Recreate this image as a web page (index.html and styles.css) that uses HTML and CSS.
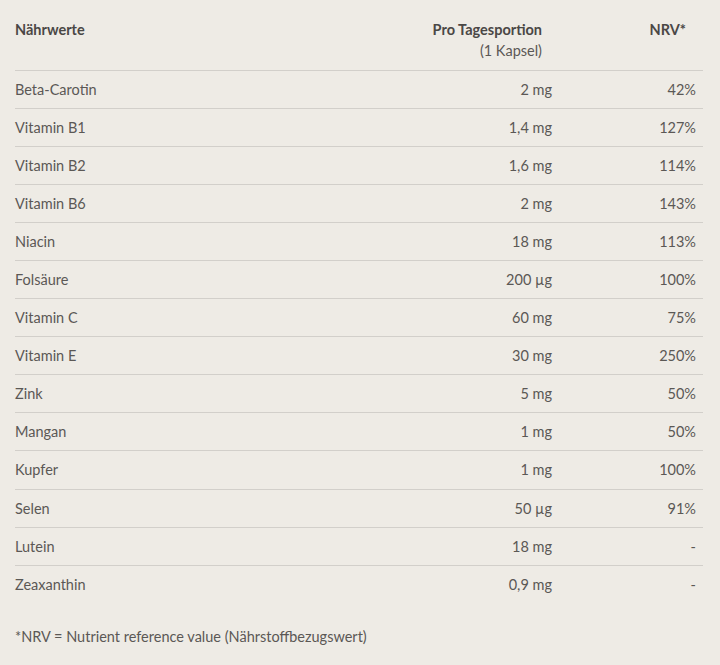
FILE: index.html
```html
<!DOCTYPE html>
<html lang="de">
<head>
<meta charset="utf-8">
<link rel="stylesheet" href="styles.css">
</head>
<body>
<div class="wrap">
<table class="nutri">
<thead>
<tr>
<th class="c1">Nährwerte</th>
<th class="c2">Pro Tagesportion<br><span class="sub">(1 Kapsel)</span></th>
<th class="c3">NRV*</th>
</tr>
</thead>
<tbody>
<tr><td class="c1">Beta-Carotin</td><td class="c2">2 mg</td><td class="c3">42%</td></tr>
<tr><td class="c1">Vitamin B1</td><td class="c2">1,4 mg</td><td class="c3">127%</td></tr>
<tr><td class="c1">Vitamin B2</td><td class="c2">1,6 mg</td><td class="c3">114%</td></tr>
<tr><td class="c1">Vitamin B6</td><td class="c2">2 mg</td><td class="c3">143%</td></tr>
<tr><td class="c1">Niacin</td><td class="c2">18 mg</td><td class="c3">113%</td></tr>
<tr><td class="c1">Folsäure</td><td class="c2">200 µg</td><td class="c3">100%</td></tr>
<tr><td class="c1">Vitamin C</td><td class="c2">60 mg</td><td class="c3">75%</td></tr>
<tr><td class="c1">Vitamin E</td><td class="c2">30 mg</td><td class="c3">250%</td></tr>
<tr><td class="c1">Zink</td><td class="c2">5 mg</td><td class="c3">50%</td></tr>
<tr><td class="c1">Mangan</td><td class="c2">1 mg</td><td class="c3">50%</td></tr>
<tr><td class="c1">Kupfer</td><td class="c2">1 mg</td><td class="c3">100%</td></tr>
<tr><td class="c1">Selen</td><td class="c2">50 µg</td><td class="c3">91%</td></tr>
<tr><td class="c1">Lutein</td><td class="c2">18 mg</td><td class="c3">-</td></tr>
<tr><td class="c1">Zeaxanthin</td><td class="c2">0,9 mg</td><td class="c3">-</td></tr>
</tbody>
</table>
<p class="note">*NRV = Nutrient reference value (Nährstoffbezugswert)</p>
</div>
</body>
</html>
```
FILE: styles.css
```css
html, body {
  margin: 0;
  padding: 0;
  background: #eeebe5;
}
body {
  font-family: Lato, "Noto Sans", sans-serif;
  font-size: 14.5px;
  color: #5b5855;
}
.wrap {
  padding: 15px 17px 0 15px;
}
.nutri {
  width: 688px;
  border-collapse: collapse;
  table-layout: fixed;
}
.nutri th {
  font-weight: 700;
  color: #4a4745;
  vertical-align: top;
  padding: 4px 0 0;
  height: 51px;
  line-height: 21px;
  border-bottom: 1px solid #d2cfca;
}
.nutri .sub {
  font-weight: 400;
  color: #5b5855;
}
.nutri td {
  height: 36.05px;
  padding: 1px 0 0;
  border-bottom: 1px solid #d2cfca;
  line-height: 20px;
}
.nutri tbody tr:last-child td { border-bottom: none; }
.c1 { text-align: left; width: 320px; }
.c2 { text-align: right; width: 207px; }
.nutri th.c2 { padding-right: 10px; }
.nutri td.c3 { text-align: right; padding-right: 7px; }
.nutri th.c3 { text-align: right; padding-right: 17px; }
.note {
  margin: 24px 0 0;
  line-height: 20px;
}
```
